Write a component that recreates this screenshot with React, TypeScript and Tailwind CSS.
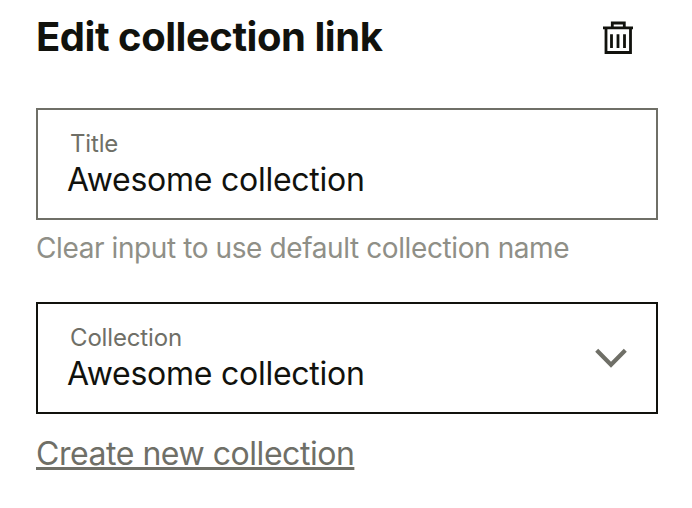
import { ReactNode } from 'react'

function TrashIcon() {
  return (
    <svg className="w-9 h-9" viewBox="0 0 36 36" fill="none" stroke="currentColor">
      <path d="M3 8.8h30M12.3 8.8V4h12v4.8M6 9v24.5h24.5V9" strokeWidth="2.8" />
      <path d="M11.5 15.2v13.8M18 15.2v13.8M24.5 15.2v13.8" strokeWidth="2.8" />
    </svg>
  )
}

function ChevronIcon() {
  return (
    <svg className="w-8 h-8" viewBox="0 0 32 32" fill="none" stroke="currentColor">
      <path d="M1.7 8.3 16 22.8l14.3-14.5" strokeWidth="4.2" />
    </svg>
  )
}

type FieldProps = {
  label: string
  value: string
  className: string
  children?: ReactNode
}

function Field({ label, value, className, children }: FieldProps) {
  return (
    <div className={`flex h-28 items-center justify-between border-2 pl-[29px] pr-[29px] ${className}`}>
      <div>
        <div className="pl-[3px] text-2xl leading-8 tracking-[-0.15px] text-[#6f6f67]">{label}</div>
        <div className="text-[32px] leading-10 tracking-[-0.25px] text-[#11120d]">{value}</div>
      </div>
      {children}
    </div>
  )
}

export default function App() {
  return (
    <div className="h-[508px] w-[692px] overflow-hidden bg-white px-9 pt-3 font-['Inter',sans-serif] whitespace-nowrap">
      <div className="flex h-[50px] w-[622px] items-center justify-between pr-[22px]">
        <h1 className="text-[40px] leading-[50px] font-bold tracking-[-0.47px] text-[#11120d]">Edit collection link</h1>
        <button className="text-[#11120d]" aria-label="Delete">
          <TrashIcon />
        </button>
      </div>

      <div className="mt-[46px] w-[622px]">
        <Field label="Title" value="Awesome collection" className="border-[#6f6f67]" />
        <p className="mt-2.5 text-[28px] leading-9 tracking-[-0.4px] text-[#8f8f87]">
          Clear input to use default collection name
        </p>
      </div>

      <div className="mt-9 w-[622px]">
        <Field label="Collection" value="Awesome collection" className="border-[#11120d]">
          <span className="text-[#6f6f67]">
            <ChevronIcon />
          </span>
        </Field>
        <a
          href="#"
          className="mt-5 inline-block text-[32px] leading-10 tracking-[-0.46px] text-[#6f6f67] underline decoration-[3px] underline-offset-2 [text-decoration-skip-ink:none]"
        >
          Create new collection
        </a>
      </div>
    </div>
  )
}
